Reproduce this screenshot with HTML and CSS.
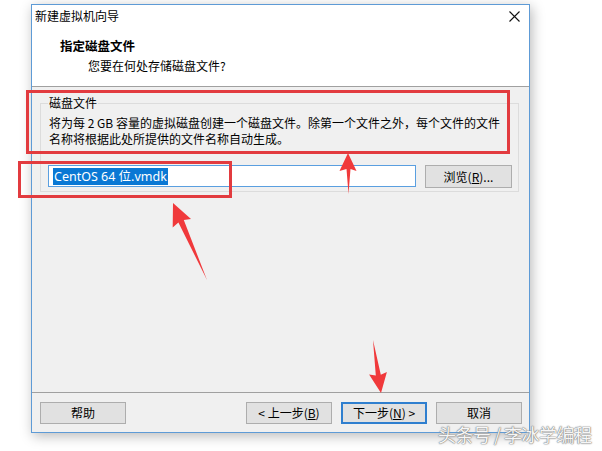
FILE: index.html
```html
<!DOCTYPE html>
<html lang="zh-CN">
<head>
<meta charset="utf-8">
<title>新建虚拟机向导</title>
<link rel="stylesheet" href="styles.css">
</head>
<body>
<div class="window">
  <div class="titlebar">
    <span class="title">新建虚拟机向导</span>
    <svg class="close" width="11" height="11" viewBox="0 0 11 11"><path d="M0.5 0.5 L10.5 10.5 M10.5 0.5 L0.5 10.5" stroke="#111" stroke-width="1.1" fill="none"/></svg>
  </div>
  <div class="header">
    <div class="heading">指定磁盘文件</div>
    <div class="subheading">您要在何处存储磁盘文件?</div>
  </div>
  <div class="content">
    <fieldset class="group">
      <legend class="legend">磁盘文件</legend>
      <p class="desc">将为每 2 GB 容量的虚拟磁盘创建一个磁盘文件。除第一个文件之外，每个文件的文件<br>名称将根据此处所提供的文件名称自动生成。</p>
      <div class="filerow">
        <div class="input"><span class="sel">CentOS 64 位.vmdk</span></div>
        <div class="btn">浏览(<u>R</u>)...</div>
      </div>
    </fieldset>
  </div>
  <div class="footer">
    <div class="btn">帮助</div>
    <div class="navbtns">
      <div class="btn">&lt; 上一步(<u>B</u>)</div>
      <div class="btn default">下一步(<u>N</u>) &gt;</div>
      <div class="btn">取消</div>
    </div>
  </div>
</div>

<svg class="annot" width="602" height="451" viewBox="0 0 602 451">
  <rect x="27.5" y="91.5" width="481" height="61" fill="none" stroke="#e23b3f" stroke-width="3"/>
  <rect x="19.5" y="162.5" width="211" height="34" fill="none" stroke="#e23b3f" stroke-width="3"/>
  <polygon fill="#f0393b" points="348,153 356.5,171 350.5,169 348.5,194 346.5,169 339.5,171"/>
  <polygon fill="#f0393b" points="173,203 191,219 183.8,220.1 207,280 178.4,222.5 172.7,227.5"/>
  <polygon fill="#f0393b" points="381,393 386.9,371.9 380.8,374.8 373,340 375.8,375.6 369.1,374.5"/>
</svg>

<div class="watermark">头条号 / 李冰学编程</div>
</body>
</html>
```

FILE: styles.css
```css
html, body {
  margin: 0;
  padding: 0;
}
body {
  width: 602px;
  height: 451px;
  background: #ffffff;
  font-family: "Noto Sans CJK SC", "Noto Sans", "Liberation Sans", sans-serif;
  font-size: 12px;
  color: #000;
  overflow: hidden;
  position: relative;
}
.window {
  box-sizing: border-box;
  margin: 4px 0 0 31px;
  width: 499px;
  height: 429px;
  border: 1px solid #5e9bd6;
  background: #f0f0f0;
  box-shadow: 2px 3px 12px rgba(0, 0, 0, 0.28);
  display: flex;
  flex-direction: column;
}
.titlebar {
  height: 22px;
  background: #fff;
  display: flex;
  align-items: center;
  justify-content: space-between;
  padding: 0 9px 0 3px;
}
.title {
  line-height: 22px;
}
.close {
  display: block;
}
.header {
  background: #fff;
  padding: 10px 0 11px 28px;
  border-bottom: 1px solid #a0a0a0;
}
.heading {
  font-weight: bold;
  font-size: 12.5px;
  line-height: 18px;
}
.subheading {
  margin-top: 2px;
  padding-left: 28px;
  line-height: 18px;
}
.content {
  flex: 1;
  padding-top: 8px;
}
.group {
  margin: 0 10px 0 8px;
  padding: 4px 6px 3px 7px;
  border: 1px solid #dcdcdc;
}
.legend {
  padding: 0 1px;
  line-height: 16px;
}
.desc {
  margin: 0;
  line-height: 16px;
  padding-left: 1px;
}
.filerow {
  margin-top: 18px;
  display: flex;
  gap: 9px;
  align-items: flex-start;
}
.input {
  box-sizing: border-box;
  flex: 1;
  height: 22px;
  background: #fff;
  border: 1px solid #5a9fe0;
  padding: 3px 0 0 4px;
  line-height: 14px;
}
.sel {
  background: #0a78d4;
  color: #fff;
  padding: 0 1px;
  font-size: 12.5px;
  font-family: "Noto Sans", "Noto Sans CJK SC", sans-serif;
}
.btn {
  box-sizing: border-box;
  width: 87px;
  height: 23px;
  background: #e1e1e1;
  border: 1px solid #adadad;
  display: flex;
  align-items: center;
  justify-content: center;
  line-height: 14px;
  white-space: nowrap;
}
.btn u {
  text-underline-offset: 1px;
}
.footer {
  border-top: 1px solid #a0a0a0;
  padding: 9px 7px 8px 8px;
  display: flex;
  justify-content: space-between;
}
.footer .btn {
  width: 86px;
  height: 22px;
}
.navbtns {
  display: flex;
  gap: 9px;
}
.btn.default {
  border: 2px solid #2f7fcf;
}
.annot {
  position: absolute;
  left: 0;
  top: 0;
  pointer-events: none;
}
.watermark {
  position: absolute;
  left: 438px;
  top: 423px;
  font-size: 18px;
  line-height: 22px;
  color: rgba(255, 255, 255, 0.95);
  text-shadow: 0 0 1px #777, 0 0 1px #777, 0 0 2px #aaa;
  letter-spacing: -0.5px;
  white-space: nowrap;
}
```
